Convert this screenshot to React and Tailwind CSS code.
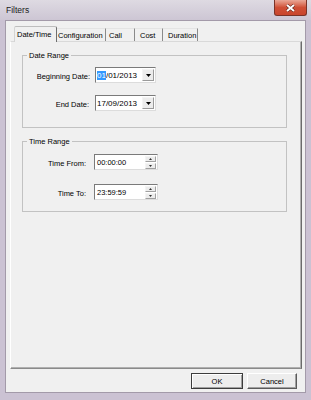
import React from "react";

function DropArrow() {
  return (
    <svg width="5" height="3" viewBox="0 0 5 3">
      <path d="M0 0h5L2.5 3z" fill="#000" />
    </svg>
  );
}

function DateInput({ value, highlight }) {
  return (
    <div className="flex h-[16px] w-[61px] items-center border border-t-[#7a7a7a] border-l-[#7a7a7a] border-r-[#dcdcdc] border-b-[#dcdcdc] bg-white pl-[1px]">
      <span className="text-[8px] leading-[11px] text-black">
        {highlight ? (
          <>
            <span className="bg-[#3399ff] text-white">{value.slice(0, 2)}</span>
            {value.slice(2)}
          </>
        ) : (
          value
        )}
      </span>
      <div className="ml-auto mr-[1px] flex h-[12px] w-[12px] items-center justify-center border border-t-[#f4f4f4] border-l-[#f4f4f4] border-r-[#9a9a9a] border-b-[#9a9a9a] bg-[#ececec]">
        <DropArrow />
      </div>
    </div>
  );
}

function TimeInput({ value }) {
  return (
    <div className="flex h-[16px] w-[64px] items-center border border-t-[#7a7a7a] border-l-[#7a7a7a] border-r-[#dcdcdc] border-b-[#dcdcdc] bg-white pl-[2px]">
      <span className="text-[7.5px] leading-[11px] text-black">{value}</span>
      <div className="ml-auto mr-[1px] flex w-[11px] flex-col gap-px">
        <div className="flex h-[6px] items-center justify-center border border-t-[#f4f4f4] border-l-[#f4f4f4] border-r-[#a0a0a0] border-b-[#a0a0a0] bg-[#ececec]">
          <svg width="3" height="2" viewBox="0 0 3 2">
            <path d="M0 2h3L1.5 0z" fill="#333" />
          </svg>
        </div>
        <div className="flex h-[6px] items-center justify-center border border-t-[#f4f4f4] border-l-[#f4f4f4] border-r-[#a0a0a0] border-b-[#a0a0a0] bg-[#ececec]">
          <svg width="3" height="2" viewBox="0 0 3 2">
            <path d="M0 0h3L1.5 2z" fill="#333" />
          </svg>
        </div>
      </div>
    </div>
  );
}

function GroupBox({ title, className, children }) {
  return (
    <fieldset className={"ml-[11px] w-[265px] border border-[#c2c2c2] " + className}>
      <legend className="ml-[4px] px-[2px] text-[7.5px] leading-[9px] text-black">{title}</legend>
      {children}
    </fieldset>
  );
}

const tabs = [
  { label: "Configuration", w: "w-[49px]", pl: "pl-[1px]" },
  { label: "Call", w: "w-[29px]", pl: "pl-[3px]" },
  { label: "Cost", w: "w-[28px]", pl: "pl-[5px]" },
  { label: "Duration", w: "w-[35px]", pl: "pl-[5px]" },
];

export default function App() {
  return (
    <div className="flex h-[400px] w-[311px] flex-col bg-[#cbc2d3] font-['Liberation_Sans',Arial,sans-serif] text-black">
      {/* title bar */}
      <div className="flex h-[20px] items-start bg-gradient-to-b from-[#dedae2] to-[#cdc6d4] pl-[6px] pr-[4px]">
        <span className="mt-[5px] text-[8.5px] leading-[11px] text-[#1a1a1a]">Filters</span>
        <button className="ml-auto flex h-[16px] w-[33px] items-center justify-center rounded-b-[3px] border border-t-0 border-[#7a3328] bg-gradient-to-b from-[#e9a797] via-[#cf4f36] to-[#c9452d]">
          <svg width="9" height="8" viewBox="0 0 9 8">
            <path d="M1 1l7 6M8 1L1 7" stroke="#5a2018" strokeWidth="3" />
            <path d="M1 1l7 6M8 1L1 7" stroke="#fff" strokeWidth="2" />
          </svg>
        </button>
      </div>

      {/* client area */}
      <div className="mx-[5px] mb-[7px] flex flex-1 flex-col border border-[#a39aa9] bg-[#f0f0f0]">
        {/* tab strip */}
        <div className="ml-[8px] mt-[5px] flex h-[15px] items-end">
          <div className="relative z-10 -mb-px flex h-[16px] w-[43px] items-center rounded-t-[2px] border border-b-0 border-t-[#bdbdbd] border-l-[#d4d4d4] border-r-[#6f6f6f] bg-[#f0f0f0] pl-[2px]">
            <span className="text-[7.5px] leading-[9px]">Date/Time</span>
          </div>
          {tabs.map((t) => (
            <div
              key={t.label}
              className={"flex h-[13px] items-center border-r border-r-[#8a8a8a] border-t border-t-[#e4e4e4] " + t.w + " " + t.pl}
            >
              <span className="text-[7.5px] leading-[9px]">{t.label}</span>
            </div>
          ))}
        </div>

        {/* tab panel */}
        <div className="ml-[4px] flex h-[328px] w-[292px] flex-col border border-t-[#d9d9d9] border-l-white border-r-[#6b6b6b] border-b-[#8a8a8a] shadow-[inset_-1px_-1px_0_#b0b0b0]">
          <GroupBox title="Date Range" className="mt-[9px] pb-[16px] pt-[7px]">
            <div className="grid grid-cols-[67px_auto] items-center gap-x-[5px] gap-y-[12px]">
              <span className="mt-[2px] text-right text-[7.5px] leading-[9px]">Beginning Date:</span>
              <DateInput value="01/01/2013" highlight />
              <span className="mt-[2px] pr-[1px] text-right text-[7.5px] leading-[9px]">End Date:</span>
              <DateInput value="17/09/2013" />
            </div>
          </GroupBox>

          <GroupBox title="Time Range" className="mt-[9px] pb-[11px] pt-[8px]">
            <div className="grid grid-cols-[63px_auto] items-center gap-x-[8px] gap-y-[14px]">
              <span className="mt-[2px] text-right text-[7.5px] leading-[9px]">Time From:</span>
              <TimeInput value="00:00:00" />
              <span className="mt-[2px] text-right text-[7.5px] leading-[9px]">Time To:</span>
              <TimeInput value="23:59:59" />
            </div>
          </GroupBox>
        </div>

        {/* buttons */}
        <div className="mt-[4px] flex justify-end gap-[4px] pr-[8px]">
          <button className="flex h-[16px] w-[52px] items-center justify-center border border-[#3c3c3c] bg-[#ededed] shadow-[inset_1px_1px_0_#fff,inset_-1px_-1px_0_#a0a0a0] text-[7.5px] leading-[9px]">
            OK
          </button>
          <button className="flex h-[16px] w-[50px] items-center justify-center border border-t-white border-l-white border-r-[#5a5a5a] border-b-[#5a5a5a] bg-[#ededed] shadow-[inset_-1px_-1px_0_#a0a0a0] text-[7.5px] leading-[9px]">
            Cancel
          </button>
        </div>
      </div>
    </div>
  );
}
